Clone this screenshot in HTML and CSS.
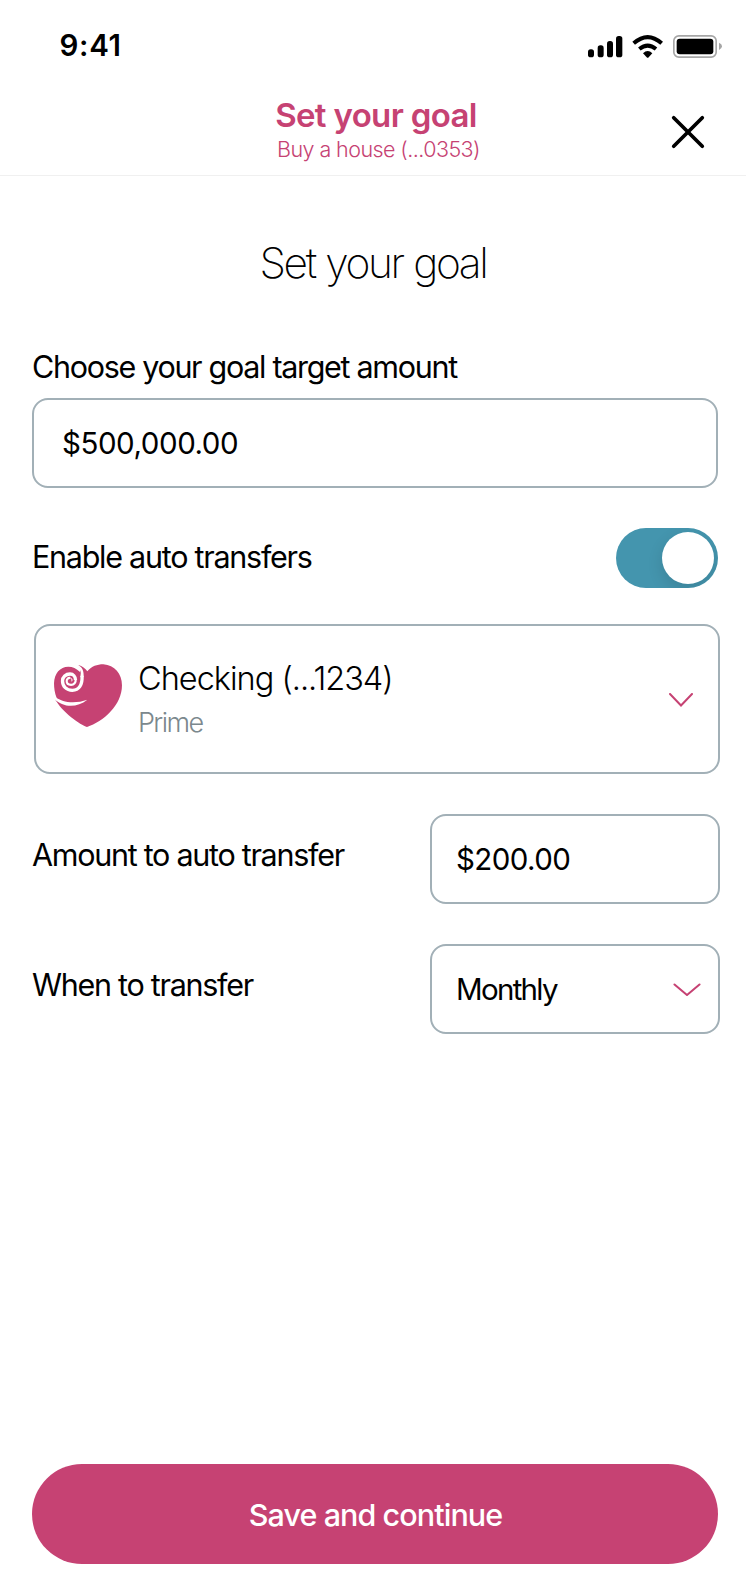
FILE: index.html
```html
<!DOCTYPE html>
<html lang="en">
<head>
<meta charset="utf-8">
<title>Set your goal</title>
<link rel="stylesheet" href="styles.css">
</head>
<body>
<div class="screen">
  <div class="status-bar">
    <span class="time">9:41</span>
    <svg class="status-icons" viewBox="84 102 405 75" width="135" height="25">
      <rect x="84" y="148" width="18" height="24" rx="8"/>
      <rect x="113" y="136" width="18" height="36" rx="8"/>
      <rect x="141" y="123" width="18" height="49" rx="8"/>
      <rect x="168" y="108" width="19" height="64" rx="8"/>
      <path d="M221 130 Q263 93 305 130" fill="none" stroke="#000" stroke-width="12"/>
      <path d="M238 147 Q263 127 288 147" fill="none" stroke="#000" stroke-width="12"/>
      <path d="M249 160Q263 146 277 160L266 172Q263 175 260 172Z"/>
      <rect x="341.500" y="107.500" width="127" height="64" rx="15" fill="none" stroke="#a6a6a6" stroke-width="5"/>
      <rect x="350" y="116" width="110" height="47" rx="9"/>
      <path d="M477 128Q486 132 486 139T477 150Z" fill="#a6a6a6"/>
    </svg>
  </div>
  <header class="header">
    <div class="header-text">
      <div class="header-title">Set your goal</div>
      <div class="header-sub">Buy a house (...0353)</div>
    </div>
    <svg class="close" viewBox="0 0 34 34" width="34" height="34"><path d="M2.700 2.700 31.300 31.300M31.300 2.700 2.700 31.300"/></svg>
  </header>
  <main class="main">
    <h1 class="heading">Set your goal</h1>
    <div class="label target-label">Choose your goal target amount</div>
    <div class="box target-box">$500,000.00</div>
    <div class="row toggle-row">
      <div class="label enable">Enable auto transfers</div>
      <div class="toggle"><div class="knob"></div></div>
    </div>
    <div class="box account">
      <svg class="logo" viewBox="42 40 204 190" width="68" height="63.300">
        <path fill="#c64273" d="M141 229C122 223 66 186 43 142L50 142C44 128 42 112 42 98C43 68 60 48 85 48C98 48 109 53 120 64L124 56L115 43C127 46 136 54 142 62C155 47 171 41 190 41C224 43 246 70 246 104C246 164 190 213 141 229Z"/>
        <path fill="#fff" d="M38 132C62 157 105 160 142 147C108 174 66 171 38 140Z"/>
        <path fill="#fff" d="M114 43C122 52 124 66 121 78L131 80C132 62 128 50 114 43Z"/>
        <path fill="none" stroke="#fff" stroke-width="10" d="M126 76C128 102 117 119 97 119C79 119 67.500 107 67.500 91C67.500 79 77 70 90 70C100 70 106.500 78 106.500 88"/>
        <path fill="none" stroke="#fff" stroke-width="6.500" d="M107 86C108 95 102 102.500 93 102.500C85 102.500 80 98 80 91C80 85 85 81 90 82"/>
        <path fill="none" stroke="#fff" stroke-width="3" d="M88 82C95 81 98 87 95 92"/>
      </svg>
      <div class="account-text">
        <div class="account-name">Checking (...1234)</div>
        <div class="account-type">Prime</div>
      </div>
      <svg class="chevron" viewBox="0 0 24 14" width="24" height="14"><path d="M1 1 12 12.500 23 1"/></svg>
    </div>
    <div class="row">
      <div class="label amount">Amount to auto transfer</div>
      <div class="box small amount-value">$200.00</div>
    </div>
    <div class="row when-row">
      <div class="label when">When to transfer</div>
      <div class="box small"><span class="monthly">Monthly</span>
        <svg class="chevron" viewBox="0 0 28 13" width="28" height="13"><path d="M1.500 1.500 14 12 26.500 1.500"/></svg>
      </div>
    </div>
  </main>
  <button class="save">Save and continue</button>
</div>
</body>
</html>
```
FILE: styles.css
```css
* { box-sizing: border-box; }
body {
  margin: 0;
  background: #fff;
  color: #000;
  font-family: Inter, "Liberation Sans", sans-serif;
}
.screen {
  width: 746px;
  height: 1574px;
  display: flex;
  flex-direction: column;
  overflow: hidden;
}
.status-bar {
  height: 92px;
  padding: 0 23px 0 59.500px;
  display: flex;
  justify-content: space-between;
  align-items: center;
}
.time { padding-bottom: 2px; font-size: 29.500px; font-weight: 600; line-height: 40px; letter-spacing: 0.7px; }
.header {
  height: 84px;
  border-bottom: 1px solid #f0f0f0;
  display: grid;
  grid-template-columns: 100px 1fr 100px;
}
.header-text { grid-column: 2; padding-top: 1px; text-align: center; color: #c64273; }
.header-title { padding-left: 6px; font-size: 33px; font-weight: 600; line-height: 44px; letter-spacing: -0.65px; }
.header-sub { margin-top: -1px; padding-left: 11px; font-size: 21.500px; font-weight: 300; line-height: 26px; letter-spacing: -0.57px; }
.close { margin: 23px 0 0 25px; }
.close path { fill: none; stroke: #000; stroke-width: 3.700; stroke-linecap: round; }
.main { flex: 1; padding: 0 26px 0 32px; }
.heading {
  margin: 62px 6px 0 0;
  text-align: center;
  font-size: 42.500px;
  font-weight: 200;
  line-height: 50px;
  letter-spacing: -2.4px;
  word-spacing: 1px;
}
.label { font-size: 30.500px; line-height: 40px; letter-spacing: -1.31px; white-space: nowrap; }
.box {
  border: 2px solid #a2b0b7;
  border-radius: 16px;
  display: flex;
  align-items: center;
  font-size: 29.500px;
}
.target-label { margin-top: 59px; }
.target-box { width: 686px; height: 90px; margin-top: 11px; padding-left: 28px; letter-spacing: -0.45px; }
.row { display: flex; justify-content: space-between; align-items: center; }
.toggle-row { margin-top: 40px; width: 686px; }
.enable { padding-bottom: 2px; letter-spacing: -1.26px; }
.toggle {
  width: 102px;
  height: 60px;
  padding: 4px;
  border-radius: 30px;
  background: #4495ae;
  display: flex;
  justify-content: flex-end;
  overflow: hidden;
}
.knob {
  width: 52px;
  height: 52px;
  border-radius: 50%;
  background: #fff;
  box-shadow: 0 6px 16px rgba(0, 0, 0, 0.12);
}
.account {
  height: 150px;
  margin: 36px 0 40px 2px;
  padding: 0 25px 0 18px;
}
.logo { margin-top: -7px; }
.account-text { flex: 1; padding-left: 16px; }
.account-name { font-size: 32.500px; font-weight: 300; line-height: 44px; letter-spacing: -1px; }
.account-type { margin-top: 2px; margin-bottom: -2px; font-size: 27px; font-weight: 300; line-height: 40px; letter-spacing: -1.6px; color: #7b888d; }
.chevron { fill: none; stroke: #c64273; stroke-width: 2; stroke-linecap: round; }
.account .chevron { margin-top: 2px; }
.amount, .when { padding-bottom: 8px; letter-spacing: -1.28px; }
.small { width: 290px; height: 90px; padding: 0 17px 0 24px; justify-content: space-between; }
.amount-value { letter-spacing: -0.6px; }
.monthly { letter-spacing: -1.7px; }
.when-row { margin-top: 40px; }
.save {
  width: 686px;
  height: 100px;
  margin: 0 0 10px 32px;
  padding: 2px 0 0 1px;
  border: 0;
  border-radius: 50px;
  background: #c64273;
  color: #fff;
  font: 500 30.500px/40px Inter, "Liberation Sans", sans-serif;
  letter-spacing: -0.92px;
}
```
